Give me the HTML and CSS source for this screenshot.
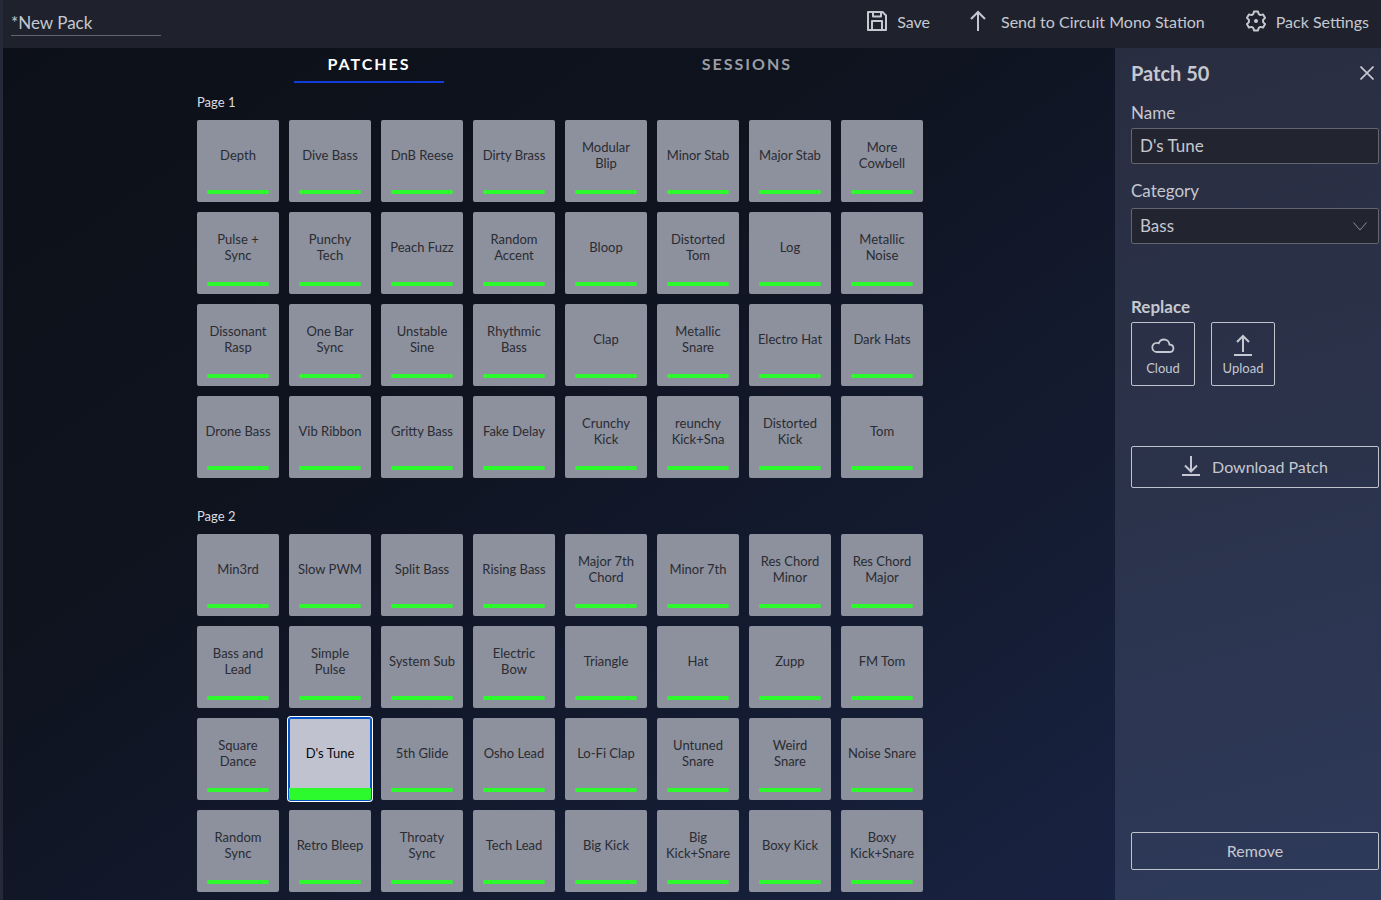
FILE: index.html
```html
<!DOCTYPE html>
<html lang="en">

<head>
    <meta charset="UTF-8">
    <meta name="viewport" content="width=device-width, initial-scale=1.0">
    <title>Pack Editor</title>
    <link rel="stylesheet" href="styles.css">
</head>

<body>
    <header class="topbar">
        <input class="pack-name" type="text" value="*New Pack" aria-label="Pack name">
        <div class="actions">
            <button class="action" type="button">
                <svg width="22" height="22" viewBox="0 0 22 22" fill="none" stroke="currentColor" stroke-width="2" stroke-linejoin="round">
                    <path d="M2 2h14.500L20 5.500V20H2zM6 20v-9h10v9M7 2v4.500h8V2"/>
                </svg>
                Save
            </button>
            <button class="action action-send" type="button">
                <svg width="16" height="22" viewBox="0 0 16 22" fill="none" stroke="currentColor" stroke-width="2">
                    <path d="M8 21V2M1 9l7-7 7 7"/>
                </svg>
                Send to Circuit Mono Station
            </button>
            <button class="action" type="button">
                <svg width="22" height="22" viewBox="0 0 22 22" fill="none" stroke="currentColor" stroke-width="2" stroke-linejoin="round">
                    <path d="M9 1.500h4l.8 2.700 1.600.9 2.700-.7 2 3.500-2 2v2.200l2 2-2 3.500-2.700-.7-1.600.9-.8 2.700H9l-.8-2.700-1.600-.9-2.700.7-2-3.500 2-2V9.900l-2-2 2-3.500 2.700.7 1.600-.9z"/>
                    <circle cx="11" cy="11" r="2" fill="currentColor" stroke="none"/>
                </svg>
                Pack Settings
            </button>
        </div>
    </header>

    <div class="layout">
        <main class="content">
            <nav class="tabs">
                <button class="tab active" type="button">PATCHES</button>
                <button class="tab" type="button">SESSIONS</button>
            </nav>
            <section class="page">
                <h2>Page 1</h2>
                <div class="grid" id="page-1"></div>
            </section>
            <section class="page">
                <h2>Page 2</h2>
                <div class="grid" id="page-2"></div>
            </section>
        </main>

        <aside class="sidebar">
            <div class="sidebar-head">
                <h1>Patch 50</h1>
                <button class="close" type="button" aria-label="Close">
                    <svg width="14" height="14" viewBox="0 0 14 14" fill="none" stroke="currentColor" stroke-width="1.700">
                        <path d="M.5.5l13 13M13.500.5l-13 13"/>
                    </svg>
                </button>
            </div>

            <label for="patch-name">Name</label>
            <input class="field" id="patch-name" type="text" value="D's Tune">

            <label for="patch-category">Category</label>
            <div class="select-wrap">
                <select class="field" id="patch-category">
                    <option>Bass</option>
                </select>
                <svg class="chevron" width="14" height="9" viewBox="0 0 14 9" fill="none" stroke="currentColor">
                    <path d="M.5.5L7 8 13.500.5"/>
                </svg>
            </div>

            <h3>Replace</h3>
            <div class="replace">
                <button class="square" type="button">
                    <svg width="24" height="22" viewBox="0 0 24 22" fill="none" stroke="currentColor" stroke-width="1.800">
                        <path d="M6 18a4.600 4.600 0 0 1-.2-9.200c.8 0 1.400.1 2 .4C8.600 7 10.500 5.500 13 5.500c3 0 5.200 2.200 5.400 5 2.500.2 4 1.700 4 3.700 0 2.200-1.600 3.800-3.900 3.800z"/>
                    </svg>
                    Cloud
                </button>
                <button class="square" type="button">
                    <svg width="18" height="22" viewBox="0 0 18 22" fill="none" stroke="currentColor" stroke-width="2">
                        <path d="M0 21h18M9 18V2M3 8l6-6 6 6"/>
                    </svg>
                    Upload
                </button>
            </div>

            <button class="wide" type="button">
                <svg width="18" height="20" viewBox="0 0 18 20" fill="none" stroke="currentColor" stroke-width="2">
                    <path d="M0 19h18M9 0v15M3 9.500l6 6 6-6"/>
                </svg>
                Download Patch
            </button>
            <button class="wide remove" type="button">Remove</button>
        </aside>
    </div>

    <script>
        const pages = {
            'page-1': [
                'Depth', 'Dive Bass', 'DnB Reese', 'Dirty Brass', 'Modular\nBlip', 'Minor Stab', 'Major Stab', 'More\nCowbell',
                'Pulse +\nSync', 'Punchy\nTech', 'Peach Fuzz', 'Random\nAccent', 'Bloop', 'Distorted\nTom', 'Log', 'Metallic\nNoise',
                'Dissonant\nRasp', 'One Bar\nSync', 'Unstable\nSine', 'Rhythmic\nBass', 'Clap', 'Metallic\nSnare', 'Electro Hat', 'Dark Hats',
                'Drone Bass', 'Vib Ribbon', 'Gritty Bass', 'Fake Delay', 'Crunchy\nKick', 'reunchy\nKick+Sna', 'Distorted\nKick', 'Tom'
            ],
            'page-2': [
                'Min3rd', 'Slow PWM', 'Split Bass', 'Rising Bass', 'Major 7th\nChord', 'Minor 7th', 'Res Chord\nMinor', 'Res Chord\nMajor',
                'Bass and\nLead', 'Simple\nPulse', 'System Sub', 'Electric\nBow', 'Triangle', 'Hat', 'Zupp', 'FM Tom',
                'Square\nDance', "D's Tune", '5th Glide', 'Osho Lead', 'Lo-Fi Clap', 'Untuned\nSnare', 'Weird\nSnare', 'Noise Snare',
                'Random\nSync', 'Retro Bleep', 'Throaty\nSync', 'Tech Lead', 'Big Kick', 'Big\nKick+Snare', 'Boxy Kick', 'Boxy\nKick+Snare'
            ]
        };

        function selectPatch(tile) {
            document.querySelectorAll('.tile').forEach(el => el.classList.remove('selected'));
            tile.classList.add('selected');
            document.getElementById('patch-name').value = tile.textContent.replace('\n', ' ');
        }

        for (const id in pages) {
            pages[id].forEach(name => {
                const tile = document.createElement('button');
                tile.type = 'button';
                tile.className = 'tile';
                const label = document.createElement('span');
                label.className = 'tile-label';
                label.textContent = name;
                const bar = document.createElement('span');
                bar.className = 'tile-bar';
                tile.append(label, bar);
                tile.addEventListener('click', () => selectPatch(tile));
                document.getElementById(id).append(tile);
                if (name === "D's Tune") {
                    selectPatch(tile);
                }
            });
        }
    </script>
</body>

</html>
```

FILE: styles.css
```css
* {
    box-sizing: border-box;
}

body {
    font-family: Lato, "Liberation Sans", sans-serif;
    font-size: 17px;
    background: linear-gradient(145deg, #0d1018 0%, #0e131e 35%, #131a2e 60%, #1a2547 100%);
    color: #c5c8d0;
    margin: 0;
    height: 100vh;
    display: flex;
    flex-direction: column;
    overflow: hidden;
}

button,
input,
select {
    font: inherit;
    color: inherit;
}

button {
    background: none;
    border: none;
    padding: 0;
    cursor: pointer;
}

.topbar {
    flex: none;
    display: flex;
    justify-content: space-between;
    align-items: center;
    height: 48px;
    padding: 0 12px 2px 8px;
    background-color: #1f222d;
    border-left: 3px solid #262a38;
}

.pack-name {
    width: 150px;
    height: 26px;
    padding: 0;
    background: none;
    border: none;
    border-bottom: 1px solid #62656f;
    outline: none;
}

.actions {
    display: flex;
    gap: 40px;
    padding-bottom: 4px;
    font-size: 16px;
}

.action {
    display: flex;
    align-items: center;
    gap: 9px;
}

.action-send {
    gap: 15px;
}

.layout {
    flex: 1;
    min-height: 0;
    display: flex;
    border-left: 3px solid #262a38;
}

.content {
    flex: 1;
    padding-left: 2px;
    overflow: hidden;
}

.tabs {
    display: flex;
    justify-content: space-around;
    width: 760px;
    margin: 0 auto;
    padding-right: 4px;
}

.tab {
    width: 150px;
    height: 35px;
    padding-bottom: 2px;
    font-size: 16px;
    font-weight: bold;
    letter-spacing: 2px;
    color: #9b9da4;
    border-bottom: 2px solid transparent;
}

.tab.active {
    color: #fff;
    border-bottom-color: #123cd8;
}

.page {
    width: 726px;
    margin: 0 auto 19px;
}

.page h2 {
    margin: 0;
    padding: 10px 0 9px;
    font-size: 13px;
    line-height: 18px;
    font-weight: normal;
    color: #dcdde2;
}

.grid {
    display: grid;
    grid-template-columns: repeat(8, 1fr);
    gap: 10px;
}

.tile {
    display: flex;
    flex-direction: column;
    align-items: center;
    height: 82px;
    background-color: #8d909d;
    border-radius: 2px;
    font-size: 13px;
    line-height: 16px;
    color: #2a2c32;
}

.tile-label {
    display: flex;
    align-items: center;
    height: 70px;
    white-space: pre-line;
}

.tile-bar {
    width: 62px;
    height: 4px;
    border-radius: 2px;
    background-color: #2dfa2d;
}

.tile.selected {
    background-color: #c0c3cf;
    color: #08090c;
    box-shadow: inset 0 0 0 1px #0655c4, 0 0 0 1px #0655c4, 0 0 0 2px #fff;
}

.tile.selected .tile-bar {
    width: 100%;
    height: 12px;
    border-radius: 0 0 2px 2px;
}

.sidebar {
    flex: none;
    display: flex;
    flex-direction: column;
    width: 266px;
    padding: 10px 2px 30px 16px;
    background: linear-gradient(165deg, #292d40, #2b334b 50%, #2e3a5b);
}

.sidebar-head {
    display: flex;
    justify-content: space-between;
    align-items: center;
    padding-right: 5px;
}

.sidebar h1 {
    margin: 0;
    font-size: 20px;
    line-height: 30px;
}

.close {
    display: flex;
}

.sidebar label {
    padding: 14px 0 4px;
    line-height: 22px;
}

.field {
    width: 100%;
    height: 36px;
    padding: 0 8px 2px;
    background-color: #22252f;
    border: 1px solid #62656b;
    border-radius: 2px;
    outline: none;
}

input.field {
    margin-bottom: 2px;
}

select.field {
    appearance: none;
}

.select-wrap {
    position: relative;
    margin-top: 2px;
}

.chevron {
    position: absolute;
    top: 14px;
    right: 12px;
    color: #8b8d93;
    pointer-events: none;
}

.sidebar h3 {
    margin: 52px 0 4px;
    font-size: 17px;
    line-height: 22px;
}

.replace {
    display: flex;
    gap: 16px;
    margin-bottom: 60px;
}

.square {
    display: flex;
    flex-direction: column;
    align-items: center;
    justify-content: center;
    gap: 3px;
    width: 64px;
    height: 64px;
    padding-top: 2px;
    border: 1px solid #bfc3cc;
    border-radius: 2px;
    font-size: 13px;
    line-height: 18px;
}

.wide {
    flex: none;
    display: flex;
    align-items: center;
    justify-content: center;
    gap: 12px;
    height: 42px;
    padding-bottom: 2px;
    border: 1px solid #bfc3cc;
    border-radius: 2px;
    font-size: 16px;
}

.remove {
    height: 38px;
    margin-top: auto;
}
```
